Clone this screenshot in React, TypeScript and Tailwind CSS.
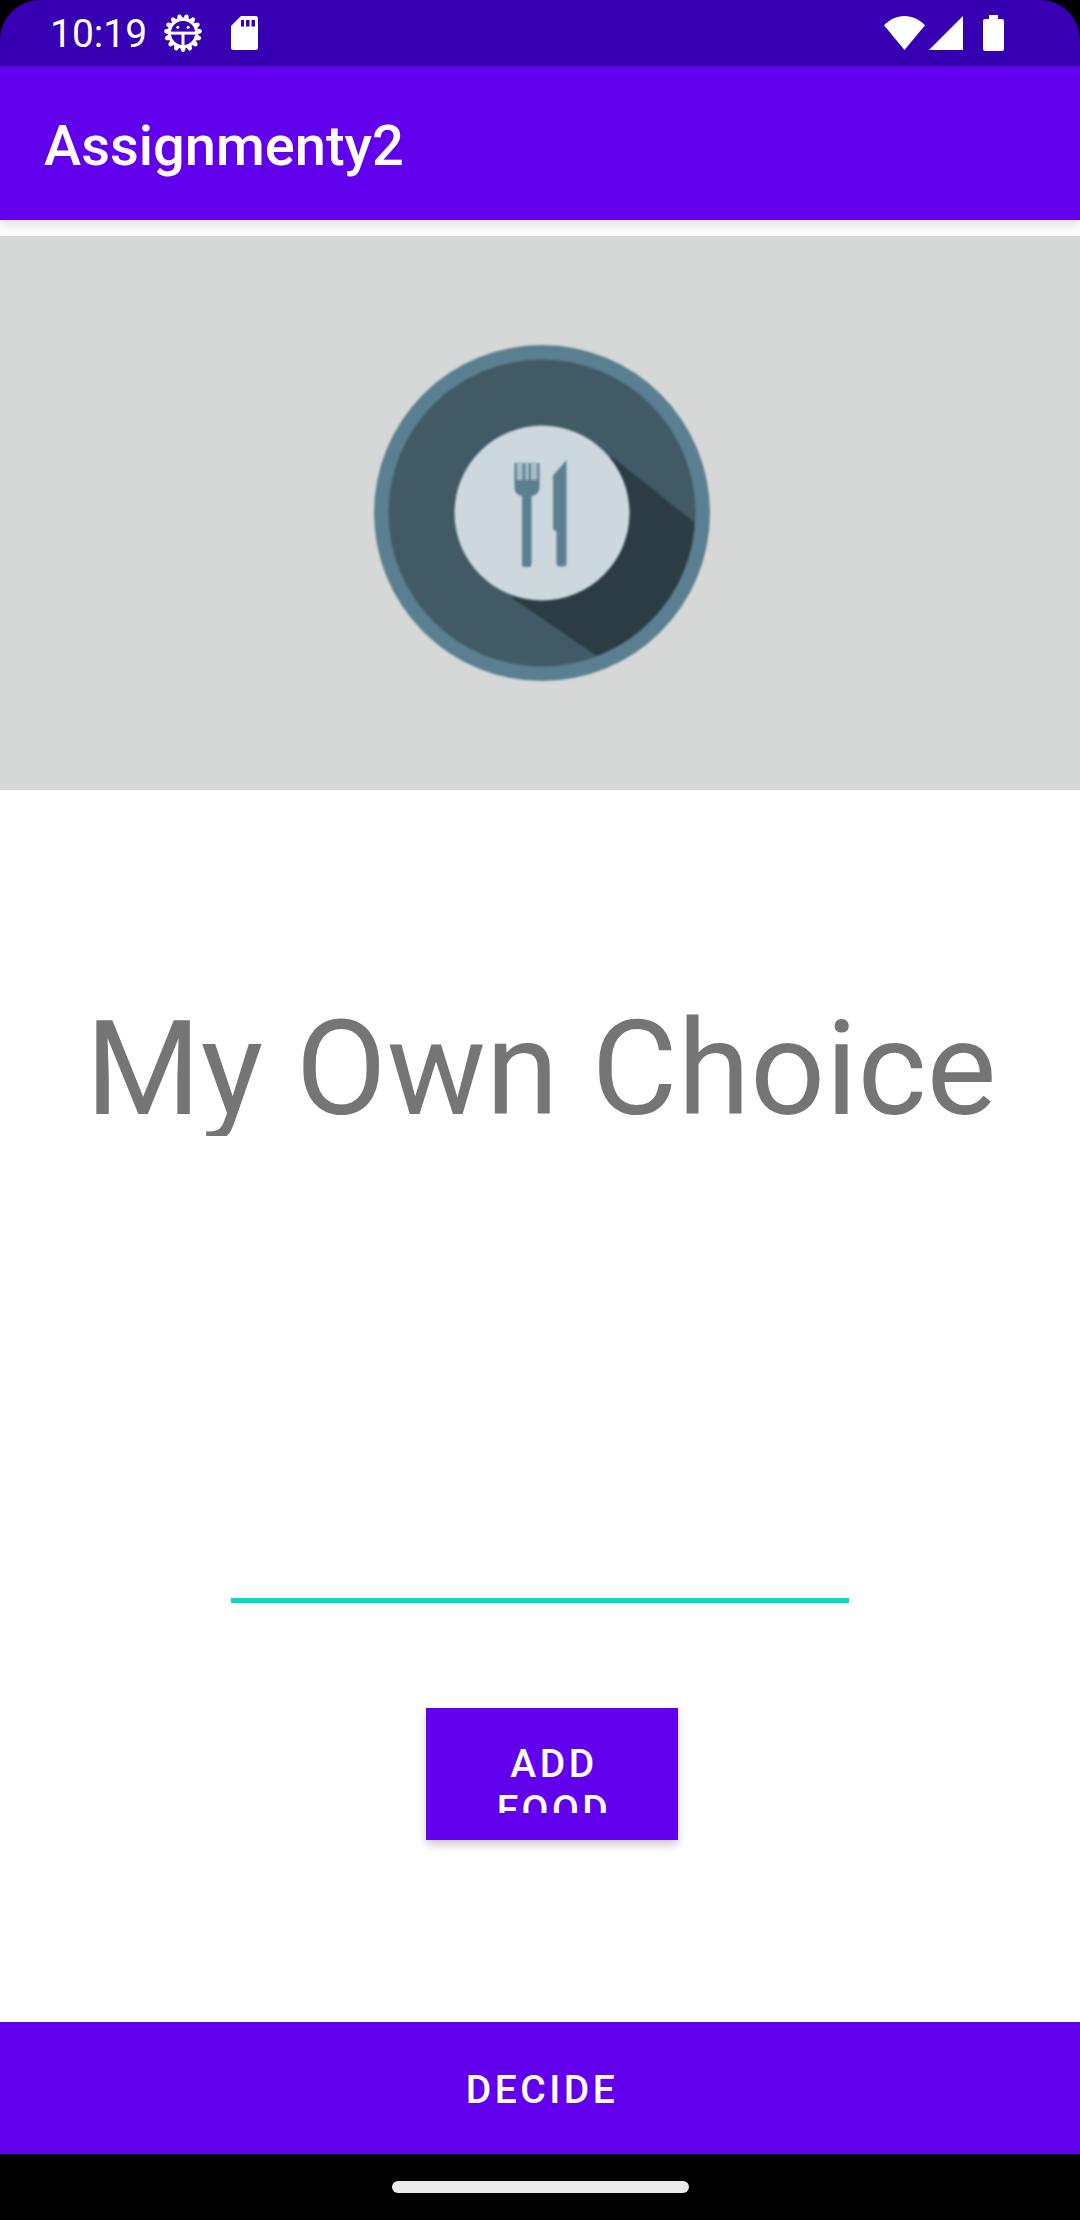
import React from "react";

const gearTeeth = Array.from({ length: 15 }, (_, i) => 12 + i * 24);

function DebugIcon() {
  return (
    <svg viewBox="0 0 38 38" className="h-[38px] w-[38px]" aria-hidden="true">
      <g fill="white">
        {gearTeeth.map((a) => (
          <path key={a} d="M15.6 6 L17.2 1 Q19 -1 20.8 1 L22.4 6 Z" transform={`rotate(${a} 19 19)`} />
        ))}
      </g>
      <circle cx="19" cy="19" r="13.5" fill="none" stroke="white" strokeWidth="3.4" />
      <circle cx="19" cy="19" r="12" fill="#3700b3" />
      <rect x="6" y="17.6" width="26" height="3" fill="white" />
      <rect x="17.5" y="19" width="3" height="14" fill="white" />
      <circle cx="13.8" cy="13.3" r="1.5" fill="white" />
      <circle cx="24.2" cy="13.3" r="1.5" fill="white" />
    </svg>
  );
}

function SdCardIcon() {
  return (
    <svg viewBox="0 0 27 34" className="h-[34px] w-[27px]" aria-hidden="true">
      <path d="M10 0H24.5Q27 0 27 2.5V31.5Q27 34 24.5 34H2.5Q0 34 0 31.5V10Z" fill="white" />
      <path d="M10 4h3v6.5h-3zM15 4h3.5v6.5H15zM20.5 4H24v6.5h-3.5z" fill="#3700b3" />
    </svg>
  );
}

function WifiIcon() {
  return (
    <svg viewBox="0 0 41 34" className="h-[34px] w-[41px]" aria-hidden="true">
      <path d="M20.5 34 0 9.3C5.6 3.6 12.5 0 20.5 0S35.4 3.6 41 9.3Z" fill="white" />
    </svg>
  );
}

function SignalIcon() {
  return (
    <svg viewBox="0 0 34 34" className="h-[34px] w-[34px]" aria-hidden="true">
      <path d="M34 0V34H0Z" fill="white" />
    </svg>
  );
}

function BatteryIcon() {
  return (
    <svg viewBox="0 0 21 36" className="h-[36px] w-[21px]" aria-hidden="true">
      <path d="M6 0h9v4h4q2 0 2 2v28q0 2-2 2H2q-2 0-2-2V6q0-2 2-2h4z" fill="white" />
    </svg>
  );
}

function PlateIcon() {
  return (
    <svg viewBox="0 0 336 336" className="h-[336px] w-[336px] blur-[1px]" role="img" aria-label="Plate with fork and knife">
      <defs>
        <clipPath id="plate">
          <circle cx="168" cy="168" r="153" />
        </clipPath>
      </defs>
      <circle cx="168" cy="168" r="168" fill="#5a7f90" />
      <circle cx="168" cy="168" r="153.5" fill="#415a65" />
      <path d="M237 111 L320 177 L336 336 H260 L223 311 L138 253 Z" fill="#2b3c44" clipPath="url(#plate)" />
      <circle cx="168" cy="168" r="87.5" fill="#cdd8de" />
      <path d="M140.500 118h25v24q0 8-8 9v68q0 3-3 3h-3.500q-3 0-3-3v-68q-7.500-1-7.500-9z" fill="#5a7f90" />
      <path d="M143 117h5.500v18H143zM151.500 117h3v18h-3zM157 117h6v18h-6z" fill="#b4c5cd" />
      <path d="M145.500 117h1v18h-1zM159.500 117h1v18h-1z" fill="#8ba5b1" />
      <path d="M192.500 115v103.500q0 3-3 3h-4q-3 0-3-3V186q-3.500 0-3.500-3v-52.500z" fill="#5a7f90" />
    </svg>
  );
}

export default function App() {
  return (
    <div className="flex min-h-screen flex-col bg-black font-['Roboto',sans-serif]">
      <div className="flex h-[66px] items-center justify-between rounded-t-[40px] bg-[#3700b3] pr-[76px] pl-[50px] text-white">
        <div className="flex items-center">
          <span className="pt-0.5 text-[39px] leading-[46px]">10:19</span>
          <span className="ml-[17px]">
            <DebugIcon />
          </span>
          <span className="ml-[29px]">
            <SdCardIcon />
          </span>
        </div>
        <div className="flex items-center">
          <WifiIcon />
          <span className="ml-1">
            <SignalIcon />
          </span>
          <span className="ml-5">
            <BatteryIcon />
          </span>
        </div>
      </div>

      <header className="z-10 flex h-[154px] items-center bg-[#6200ee] px-11 pt-1.5 shadow-[0_4px_12px_rgba(0,0,0,0.15)]">
        <h1 className="text-[56px] leading-[64px] font-medium text-white">Assignmenty2</h1>
      </header>

      <main className="flex flex-1 flex-col items-center bg-white pt-4">
        <div className="flex w-full items-center justify-center bg-[#d6d8d7] pt-[109px] pb-[109px] pl-1">
          <PlateIcon />
        </div>

        <h2 className="mt-[200px] h-[146px] w-full overflow-hidden pl-0.5 text-center text-[132px] leading-[158px] text-[#757575]">
          My Own Choice
        </h2>

        <input
          type="text"
          aria-label="Food name"
          className="mt-[340px] h-[127px] w-[618px] border-b-[5px] border-[#03dac5] bg-transparent text-[50px] text-black outline-none"
        />

        <button
          type="button"
          className="mt-[105px] ml-6 h-[132px] w-[252px] bg-[#6200ee] pt-[33px] pr-10 pb-[27px] pl-11 text-[39px] leading-[46px] font-medium tracking-[0.09em] text-white shadow-[0_5px_8px_rgba(0,0,0,0.2)]"
        >
          <span className="block h-[72px] overflow-hidden">ADD FOOD</span>
        </button>

        <div className="flex-1" />

        <button
          type="button"
          className="h-[132px] w-full bg-[#6200ee] pt-1 pl-1 text-[39px] leading-[46px] font-medium tracking-[0.09em] text-white"
        >
          DECIDE
        </button>
      </main>

      <div className="flex h-[66px] items-center justify-center">
        <div className="h-3 w-[297px] rounded-full bg-[#ebebeb]" />
      </div>
    </div>
  );
}
